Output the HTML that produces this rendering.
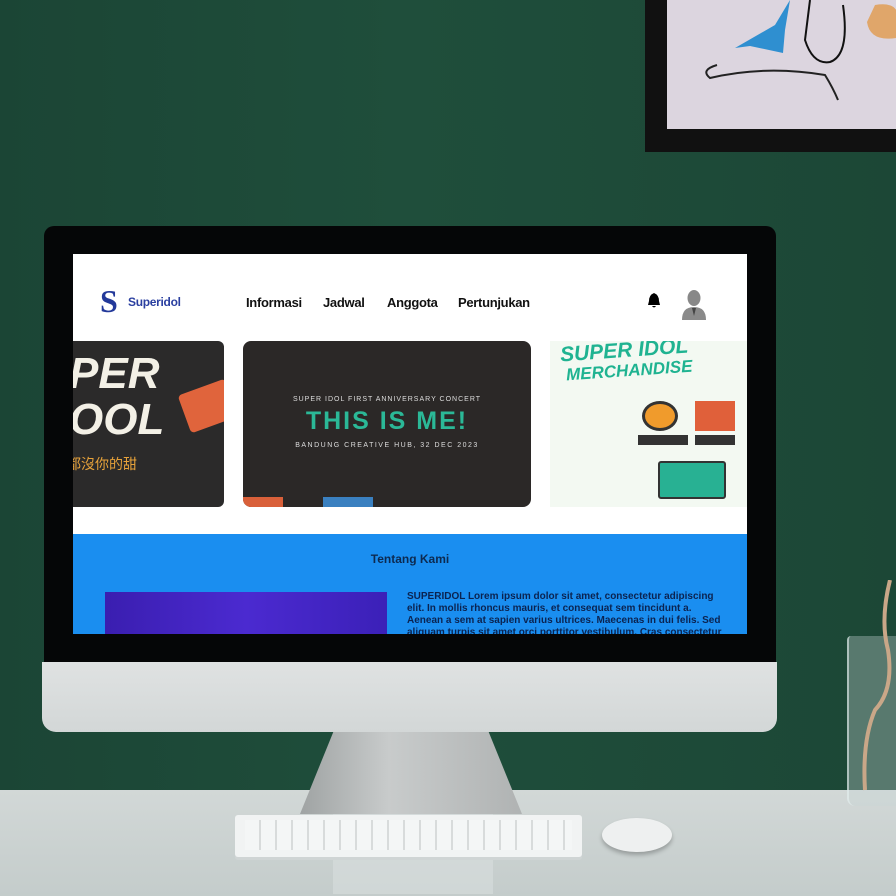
<!DOCTYPE html>
<html><head><meta charset="utf-8"><style>
*{margin:0;padding:0;box-sizing:border-box}
body{width:896px;height:896px;overflow:hidden;position:relative;background:#1e4a38;font-family:"Liberation Sans","Noto Sans CJK TC",sans-serif}
.a{position:absolute}
.nav{font-size:13px;font-weight:bold;color:#111;top:295px;letter-spacing:-0.3px}
</style></head><body>
<div class="a" style="left:0;top:0;width:896px;height:790px;background:linear-gradient(90deg,#1b4535 0%,#1f4e3b 45%,#1c4736 100%)"></div>
<!-- painting -->
<div class="a" style="left:645px;top:0;width:251px;height:152px;background:#111"></div>
<div class="a" style="left:667px;top:0;width:229px;height:129px;background:#dcd5df"></div>
<svg class="a" style="left:645px;top:0" width="251" height="152">
<path d="M145 0 L130 25 L90 48 L105 46 L138 53 L140 30 Z" fill="#2f8fd0"/>
<path d="M165 0 L160 40 Q168 65 185 62 Q205 55 198 5" fill="none" stroke="#111" stroke-width="2"/>
<path d="M72 65 Q55 70 65 78 Q120 65 180 75 Q188 88 193 100" fill="none" stroke="#222" stroke-width="2"/>
<path d="M230 5 Q260 0 251 30 L251 38 Q225 42 222 22 Z" fill="#e0a66a"/>
</svg>
<!-- desk -->
<div class="a" style="left:0;top:790px;width:896px;height:106px;background:linear-gradient(180deg,#d2d8d7,#c4cccb)"></div>
<!-- stand -->
<div class="a" style="left:300px;top:732px;width:222px;height:82px;background:linear-gradient(90deg,#9fa3a3,#c8cbcb 40%,#b0b3b3);clip-path:polygon(15% 0,85% 0,100% 100%,0 100%)"></div>
<div class="a" style="left:333px;top:814px;width:160px;height:80px;background:rgba(220,225,225,.5)"></div>
<!-- monitor -->
<div class="a" style="left:44px;top:226px;width:732px;height:440px;background:#050607;border-radius:10px 10px 0 0"></div>
<div class="a" style="left:42px;top:662px;width:735px;height:70px;background:linear-gradient(180deg,#dfe2e2,#d3d7d7);border-radius:0 0 14px 14px"></div>
<!-- screen -->
<div class="a" style="left:73px;top:254px;width:674px;height:380px;background:#fff;overflow:hidden">
  <div class="a" style="left:27px;top:31px;font-family:'Liberation Serif',serif;font-size:32px;font-weight:bold;color:#23399a;line-height:32px">S</div>
  <div class="a" style="left:55px;top:41px;font-size:12px;font-weight:bold;color:#2a3fa0;letter-spacing:-0.3px">Superidol</div>
  <div class="a nav" style="left:173px;top:41px">Informasi</div>
  <div class="a nav" style="left:250px;top:41px">Jadwal</div>
  <div class="a nav" style="left:314px;top:41px">Anggota</div>
  <div class="a nav" style="left:385px;top:41px">Pertunjukan</div>
  <svg class="a" style="left:574px;top:38px" width="14" height="18"><path d="M7 1 Q2 3 2 9 L1 13 L13 13 L12 9 Q12 3 7 1Z M5 14 Q7 17 9 14Z" fill="#000"/></svg>
  <svg class="a" style="left:608px;top:34px" width="26" height="32"><ellipse cx="13" cy="10" rx="6.5" ry="8" fill="#888"/><path d="M1 32 Q1 19 13 19 Q25 19 25 32Z" fill="#8a8a8a"/><path d="M11 20 L13 28 L15 20Z" fill="#444"/></svg>
  <!-- banners -->
  <div class="a" style="left:0;top:87px;width:151px;height:166px;background:#2b2a2a;border-radius:0 6px 6px 0;overflow:hidden">
    <div class="a" style="left:-4px;top:10px;font-size:44px;font-weight:bold;font-style:italic;color:#f3f0e6;line-height:46px">PER<br>OOL</div>
    <div class="a" style="left:110px;top:45px;width:50px;height:40px;background:#e0643c;transform:rotate(-20deg);border-radius:4px"></div>
    <div class="a" style="left:-6px;top:113px;font-size:14px;color:#e7a23a">都沒你的甜</div>
  </div>
  <div class="a" style="left:170px;top:87px;width:288px;height:166px;background:#2b2827;border-radius:8px;overflow:hidden">
    <div class="a" style="left:0;top:55px;width:288px;text-align:center;font-size:7px;letter-spacing:1px;color:#ddd">SUPER IDOL FIRST ANNIVERSARY CONCERT</div>
    <div class="a" style="left:0;top:66px;width:288px;text-align:center;font-size:25px;font-weight:bold;letter-spacing:2px;color:#2bb897">THIS IS ME!</div>
    <div class="a" style="left:0;top:101px;width:288px;text-align:center;font-size:7px;letter-spacing:1.5px;color:#ddd">BANDUNG CREATIVE HUB, 32 DEC 2023</div>
    <div class="a" style="left:80px;top:156px;width:50px;height:12px;background:#3a80c0"></div>
    <div class="a" style="left:0;top:156px;width:40px;height:12px;background:#d9603a"></div>
  </div>
  <div class="a" style="left:477px;top:87px;width:197px;height:166px;background:#f3f9f2;overflow:hidden">
    <div class="a" style="left:10px;top:-2px;font-size:21px;font-weight:bold;font-style:italic;color:#1fb391;transform:rotate(-4deg)">SUPER IDOL</div>
    <div class="a" style="left:16px;top:20px;font-size:17px;font-weight:bold;font-style:italic;color:#1fb391;transform:rotate(-4deg)">MERCHANDISE</div>
    <div class="a" style="left:92px;top:60px;width:36px;height:30px;border-radius:50%;background:#f09b2c;border:3px solid #333"></div>
    <div class="a" style="left:88px;top:94px;width:50px;height:10px;background:#333"></div>
    <div class="a" style="left:145px;top:60px;width:40px;height:30px;background:#e0603a"></div>
    <div class="a" style="left:145px;top:94px;width:40px;height:10px;background:#333"></div>
    <div class="a" style="left:108px;top:120px;width:68px;height:38px;background:#28b193;border:2px solid #333;border-radius:3px"></div>
  </div>
  <!-- blue section -->
  <div class="a" style="left:0;top:280px;width:674px;height:100px;background:#1a8ef0">
    <div class="a" style="left:0;top:18px;width:674px;text-align:center;font-size:12px;font-weight:bold;color:#0d2a50">Tentang Kami</div>
    <div class="a" style="left:32px;top:58px;width:282px;height:50px;background:linear-gradient(90deg,#3a1eb0,#4b2ad0 50%,#3b20b8)"></div>
    <div class="a" style="left:334px;top:57px;width:320px;font-size:10px;font-weight:bold;line-height:12px;color:#0b2350">SUPERIDOL Lorem ipsum dolor sit amet, consectetur adipiscing elit. In mollis rhoncus mauris, et consequat sem tincidunt a. Aenean a sem at sapien varius ultrices. Maecenas in dui felis. Sed aliquam turpis sit amet orci porttitor vestibulum. Cras consectetur</div>
  </div>
</div>
<!-- keyboard -->
<div class="a" style="left:235px;top:815px;width:347px;height:42px;background:#f1f3f3;border-radius:3px;box-shadow:0 3px 0 #cfd4d4"></div>
<div class="a" style="left:245px;top:820px;width:327px;height:30px;background:repeating-linear-gradient(90deg,#f7f8f8 0 14px,#c8cccc 14px 16px),#fff;opacity:.6"></div>
<!-- mouse -->
<div class="a" style="left:602px;top:818px;width:70px;height:34px;background:#eef0f0;border-radius:50%;box-shadow:0 3px 4px rgba(0,0,0,.25)"></div>
<!-- vase -->
<div class="a" style="left:847px;top:636px;width:49px;height:170px;background:rgba(200,215,215,.35);border-left:2px solid rgba(230,240,240,.6);border-radius:4px 0 0 8px"></div>
<svg class="a" style="left:850px;top:580px" width="46" height="230"><path d="M40 0 Q30 40 38 70 Q44 110 25 130 Q12 160 15 210" fill="none" stroke="#c9a788" stroke-width="4"/></svg>
</body></html>
